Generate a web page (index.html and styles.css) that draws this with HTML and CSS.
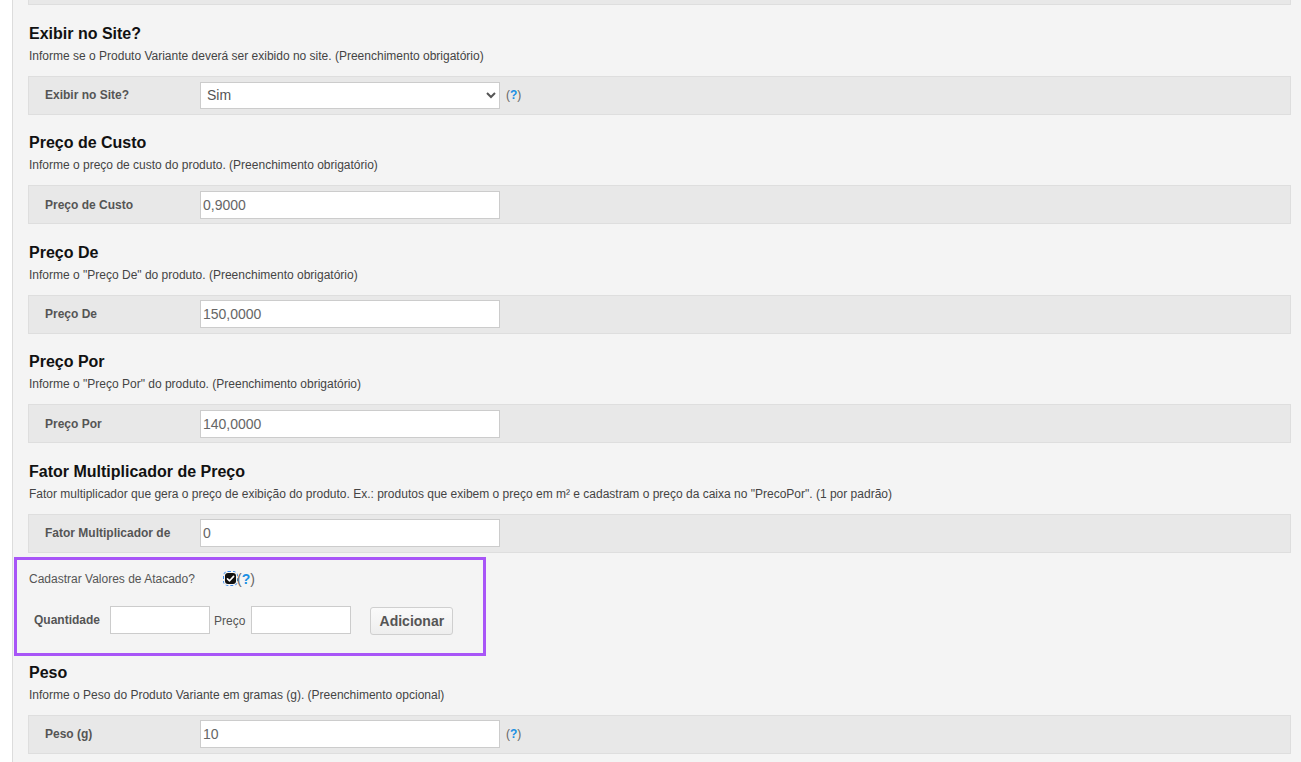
FILE: index.html
```html
<!DOCTYPE html>
<html lang="pt-BR">
<head>
    <meta charset="UTF-8">
    <meta name="viewport" content="width=device-width, initial-scale=1.0">
    <title>Produto Variante</title>
    <link rel="stylesheet" href="styles.css">
</head>
<body>

    <!--INICIO PAINEL-->
    <div class="painel">

        <div class="linha linha-topo"></div>

        <!-- Exibir no site -->
        <div class="secao">
            <h3>Exibir no Site?</h3>
            <p>Informe se o Produto Variante deverá ser exibido no site. (Preenchimento obrigatório)</p>
            <div class="linha">
                <label for="exibir">Exibir no Site?</label>
                <select id="exibir" name="exibir">
                    <option value="sim">Sim</option>
                    <option value="nao">Não</option>
                </select>
                <span class="ajuda">(<b>?</b>)</span>
            </div>
        </div>

        <!-- Preço de custo -->
        <div class="secao">
            <h3>Preço de Custo</h3>
            <p>Informe o preço de custo do produto. (Preenchimento obrigatório)</p>
            <div class="linha">
                <label for="preco_custo">Preço de Custo</label>
                <input type="text" id="preco_custo" name="preco_custo" value="0,9000">
            </div>
        </div>

        <!-- Preço de -->
        <div class="secao">
            <h3>Preço De</h3>
            <p>Informe o "Preço De" do produto. (Preenchimento obrigatório)</p>
            <div class="linha">
                <label for="preco_de">Preço De</label>
                <input type="text" id="preco_de" name="preco_de" value="150,0000">
            </div>
        </div>

        <!-- Preço por -->
        <div class="secao">
            <h3>Preço Por</h3>
            <p>Informe o "Preço Por" do produto. (Preenchimento obrigatório)</p>
            <div class="linha">
                <label for="preco_por">Preço Por</label>
                <input type="text" id="preco_por" name="preco_por" value="140,0000">
            </div>
        </div>

        <!-- Fator multiplicador -->
        <div class="secao">
            <h3>Fator Multiplicador de Preço</h3>
            <p>Fator multiplicador que gera o preço de exibição do produto. Ex.: produtos que exibem o preço em m² e cadastram o preço da caixa no "PrecoPor". (1 por padrão)</p>
            <div class="linha">
                <label for="fator">Fator Multiplicador de</label>
                <input type="text" id="fator" name="fator" value="0">
            </div>
        </div>

        <!--INICIO ATACADO-->
        <div class="atacado">
            <div class="atacado-topo">
                <span class="atacado-titulo">Cadastrar Valores de Atacado?</span>
                <span class="check">
                    <svg width="11" height="11" viewBox="0 0 11 11"><path d="M2.5 5.8 L4.6 7.8 L8.6 3.4" fill="none" stroke="#fff" stroke-width="1.6" stroke-linecap="round" stroke-linejoin="round"/></svg>
                </span>
                <span class="ajuda ajuda-grande">(<b>?</b>)</span>
            </div>
            <div class="atacado-campos">
                <label for="quantidade">Quantidade</label>
                <input type="text" id="quantidade" name="quantidade">
                <span class="rotulo-preco">Preço</span>
                <input type="text" id="preco_atacado" name="preco_atacado">
                <button type="button">Adicionar</button>
            </div>
        </div>
        <!--FIM ATACADO-->

        <!-- Peso -->
        <div class="secao secao-peso">
            <h3>Peso</h3>
            <p>Informe o Peso do Produto Variante em gramas (g). (Preenchimento opcional)</p>
            <div class="linha">
                <label for="peso">Peso (g)</label>
                <input type="text" id="peso" name="peso" value="10">
                <span class="ajuda">(<b>?</b>)</span>
            </div>
        </div>

    </div>
    <!--FIM PAINEL-->

</body>
</html>
```

FILE: styles.css
```css
body {
    font-family: "Liberation Sans", Arial, sans-serif;
    margin: 0;
    color: #222;
    background-color: #fff;
    overflow: hidden;
}

.painel {
    margin-left: 12px;
    border-left: 1px solid #dcdcdc;
    background-color: #f4f4f4;
    padding: 0 10px 40px 15px;
    min-height: 800px;
}

.linha {
    display: flex;
    align-items: center;
    height: 37px;
    padding-left: 16px;
    background-color: #e8e8e8;
    border: 1px solid #dedede;
}

.linha-topo {
    height: 4px;
    border-top: none;
}

.secao {
    padding-top: 18.5px;
}

h3 {
    font-size: 16px;
    line-height: 20px;
    margin: 0;
    padding-left: 1px;
    color: #111;
}

.secao p {
    font-size: 12px;
    line-height: 16px;
    margin: 4px 0 12px;
    padding-left: 1px;
    color: #444;
}

.linha label {
    width: 145px;
    margin-right: 10px;
    font-size: 12px;
    font-weight: bold;
    color: #555;
    white-space: nowrap;
}

input, select {
    font-family: "Liberation Sans", Arial, sans-serif;
    font-size: 14px;
    color: #666;
    background-color: #fff;
    border: 1px solid #ccc;
    box-sizing: border-box;
}

.linha input, .linha select {
    width: 300px;
    height: 28px;
    padding: 0 2px;
}

.linha select {
    height: 27px;
    color: #555;
}

.ajuda {
    margin-left: 6px;
    font-size: 12px;
    color: #666;
}

.ajuda b {
    color: #1a8fe3;
}

.atacado {
    width: 454px;
    margin: 4px 0 0 -14px;
    padding: 11px 0 18px 12px;
    border: 3px solid #a855f7;
}

.atacado-topo {
    display: flex;
    align-items: center;
    height: 16px;
    font-size: 12px;
    color: #555;
}

.atacado-titulo {
    width: 196px;
}

.check {
    display: inline-flex;
    width: 11px;
    height: 11px;
    background-color: #111;
    border-radius: 3px;
    outline: 1px dashed #3b8beb;
    outline-offset: 1px;
}

.ajuda-grande {
    margin-left: 1px;
    font-size: 14px;
    color: #666;
}

.atacado-campos {
    display: flex;
    align-items: center;
    margin-top: 18px;
    padding-left: 5px;
    font-size: 12px;
}

.atacado-campos label {
    width: 76px;
    font-weight: bold;
    color: #555;
}

.atacado-campos input {
    width: 100px;
    height: 28px;
}

.rotulo-preco {
    margin: 0 6px 0 4px;
    font-size: 12px;
    color: #555;
    padding-top: 2px;
}

button {
    margin: 2px 0 0 19px;
    width: 83px;
    height: 28px;
    font-family: "Liberation Sans", Arial, sans-serif;
    font-size: 14px;
    font-weight: bold;
    color: #555;
    background: linear-gradient(#fafafa, #eeeeee);
    border: 1px solid #cfcfcf;
    border-radius: 3px;
    cursor: pointer;
}

.secao-peso {
    padding-top: 7px;
}
```
